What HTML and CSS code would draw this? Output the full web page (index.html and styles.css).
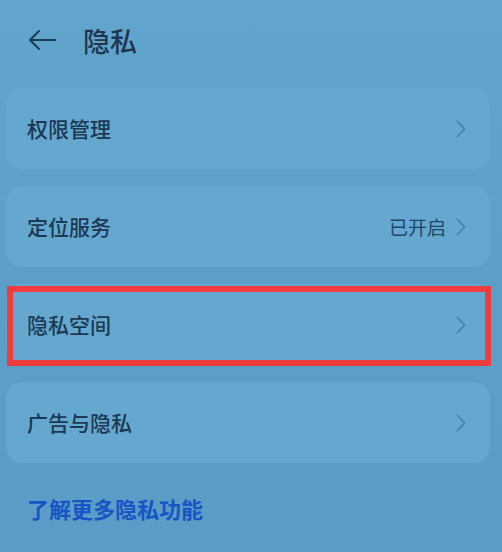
FILE: index.html
```html
<!DOCTYPE html>
<html lang="zh">
<head>
<meta charset="utf-8">
<link rel="stylesheet" href="styles.css">
</head>
<body>
<div class="screen">
  <header class="header">
    <svg class="back" width="28" height="22" viewBox="0 0 28 22">
      <path d="M27 11H2M11 2L2 11l9 9" fill="none" stroke="#1f3a52" stroke-width="2" stroke-linecap="round" stroke-linejoin="round"/>
    </svg>
    <h1 class="title">隐私</h1>
  </header>
  <div class="list">
    <div class="card"><span class="label">权限管理</span><span class="right"><svg class="chev" width="10" height="18" viewBox="0 0 10 18"><path d="M1.5 1.5L8.5 9l-7 7.5" fill="none" stroke="#4680a8" stroke-width="1.7" stroke-linecap="round" stroke-linejoin="round"/></svg></span></div>
    <div class="card"><span class="label">定位服务</span><span class="right"><span class="value">已开启</span><svg class="chev" width="10" height="18" viewBox="0 0 10 18"><path d="M1.5 1.5L8.5 9l-7 7.5" fill="none" stroke="#4680a8" stroke-width="1.7" stroke-linecap="round" stroke-linejoin="round"/></svg></span></div>
    <div class="card marked"><span class="label">隐私空间</span><span class="right"><svg class="chev" width="10" height="18" viewBox="0 0 10 18"><path d="M1.5 1.5L8.5 9l-7 7.5" fill="none" stroke="#4680a8" stroke-width="1.7" stroke-linecap="round" stroke-linejoin="round"/></svg></span><div class="highlight"></div></div>
    <div class="card"><span class="label">广告与隐私</span><span class="right"><svg class="chev" width="10" height="18" viewBox="0 0 10 18"><path d="M1.5 1.5L8.5 9l-7 7.5" fill="none" stroke="#4680a8" stroke-width="1.7" stroke-linecap="round" stroke-linejoin="round"/></svg></span></div>
  </div>
  <a class="more">了解更多隐私功能</a>
</div>
</body>
</html>
```
FILE: styles.css
```css
html, body {
  margin: 0;
  padding: 0;
}
body {
  width: 502px;
  height: 552px;
  overflow: hidden;
  background: #5c9fc7;
  font-family: "Noto Sans CJK SC", "Noto Sans", sans-serif;
  color: #1c3852;
}
.screen {
  width: 502px;
  height: 552px;
  background: linear-gradient(180deg, #62a5cc 0%, #5b9fc8 50%, #5a9cc5 100%);
  overflow: hidden;
}
.header {
  height: 88px;
  display: flex;
  align-items: center;
  padding-left: 28px;
  padding-bottom: 8px;
  box-sizing: border-box;
}
.back {
  display: block;
}
.title {
  margin: 0 0 0 27px;
  font-size: 27px;
  font-weight: 500;
  line-height: 1;
  color: #1e3650;
}
.list {
  display: flex;
  flex-direction: column;
  gap: 17px;
  padding-left: 6px;
  width: 484px;
}
.card {
  position: relative;
  height: 81px;
  border-radius: 16px;
  background: #64a8d0;
  display: flex;
  align-items: center;
  justify-content: space-between;
  padding: 0 24px 0 21px;
  box-sizing: border-box;
}
.label {
  font-size: 21px;
  font-weight: 500;
  line-height: 1;
  color: #1c3852;
}
.right {
  display: flex;
  align-items: center;
  gap: 10px;
}
.value {
  font-size: 19px;
  color: #1f4666;
  line-height: 1;
}
.chev {
  display: block;
}
.highlight {
  position: absolute;
  left: 1px;
  right: -1px;
  top: 2px;
  bottom: -1px;
  border: 6px solid #f03c3c;
  pointer-events: none;
}
.more {
  display: block;
  margin: 34px 0 0 27px;
  font-size: 22px;
  font-weight: 700;
  color: #1655c6;
  line-height: 1;
}
```
